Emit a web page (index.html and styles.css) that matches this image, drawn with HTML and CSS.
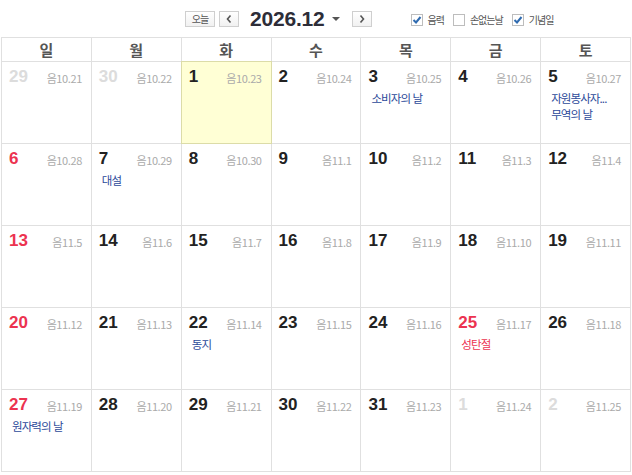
FILE: index.html
```html
<!DOCTYPE html>
<html lang="ko">
<head>
<meta charset="utf-8">
<title>2026.12</title>
<link rel="stylesheet" href="styles.css">
</head>
<body>
<div class="cal">
  <div class="topbar">
    <div class="nav">
      <button class="btn today-btn">오늘</button>
      <button class="btn arrow-btn prev"><svg width="8" height="10" viewBox="0 0 8 10"><path d="M5.5 1.5 L2.5 5 L5.5 8.5" fill="none" stroke="#555" stroke-width="1.6"/></svg></button>
      <div class="title">2026.12</div>
      <span class="caret"></span>
      <button class="btn arrow-btn next"><svg width="8" height="10" viewBox="0 0 8 10"><path d="M2.5 1.5 L5.5 5 L2.5 8.5" fill="none" stroke="#555" stroke-width="1.6"/></svg></button>
    </div>
    <div class="opts">
      <label class="opt"><span class="chk on"><svg width="10" height="10" viewBox="0 0 10 10"><path d="M1.5 5 L4 7.5 L8.5 2" fill="none" stroke="#2f6bb0" stroke-width="2"/></svg></span>음력</label>
      <label class="opt"><span class="chk"></span>손없는날</label>
      <label class="opt"><span class="chk on"><svg width="10" height="10" viewBox="0 0 10 10"><path d="M1.5 5 L4 7.5 L8.5 2" fill="none" stroke="#2f6bb0" stroke-width="2"/></svg></span>기념일</label>
    </div>
  </div>
  <div class="grid">
    <div class="wd">일</div><div class="wd">월</div><div class="wd">화</div><div class="wd">수</div><div class="wd">목</div><div class="wd">금</div><div class="wd">토</div>

    <div class="cell other"><div class="head"><span class="num">29</span><span class="lunar">음10.21</span></div></div>
    <div class="cell other"><div class="head"><span class="num">30</span><span class="lunar">음10.22</span></div></div>
    <div class="cell today"><div class="head"><span class="num">1</span><span class="lunar">음10.23</span></div></div>
    <div class="cell"><div class="head"><span class="num">2</span><span class="lunar">음10.24</span></div></div>
    <div class="cell"><div class="head"><span class="num">3</span><span class="lunar">음10.25</span></div><div class="ev">소비자의 날</div></div>
    <div class="cell"><div class="head"><span class="num">4</span><span class="lunar">음10.26</span></div></div>
    <div class="cell"><div class="head"><span class="num">5</span><span class="lunar">음10.27</span></div><div class="ev">자원봉사자...</div><div class="ev">무역의 날</div></div>

    <div class="cell sun"><div class="head"><span class="num">6</span><span class="lunar">음10.28</span></div></div>
    <div class="cell"><div class="head"><span class="num">7</span><span class="lunar">음10.29</span></div><div class="ev">대설</div></div>
    <div class="cell"><div class="head"><span class="num">8</span><span class="lunar">음10.30</span></div></div>
    <div class="cell"><div class="head"><span class="num">9</span><span class="lunar">음11.1</span></div></div>
    <div class="cell"><div class="head"><span class="num">10</span><span class="lunar">음11.2</span></div></div>
    <div class="cell"><div class="head"><span class="num">11</span><span class="lunar">음11.3</span></div></div>
    <div class="cell"><div class="head"><span class="num">12</span><span class="lunar">음11.4</span></div></div>

    <div class="cell sun"><div class="head"><span class="num">13</span><span class="lunar">음11.5</span></div></div>
    <div class="cell"><div class="head"><span class="num">14</span><span class="lunar">음11.6</span></div></div>
    <div class="cell"><div class="head"><span class="num">15</span><span class="lunar">음11.7</span></div></div>
    <div class="cell"><div class="head"><span class="num">16</span><span class="lunar">음11.8</span></div></div>
    <div class="cell"><div class="head"><span class="num">17</span><span class="lunar">음11.9</span></div></div>
    <div class="cell"><div class="head"><span class="num">18</span><span class="lunar">음11.10</span></div></div>
    <div class="cell"><div class="head"><span class="num">19</span><span class="lunar">음11.11</span></div></div>

    <div class="cell sun"><div class="head"><span class="num">20</span><span class="lunar">음11.12</span></div></div>
    <div class="cell"><div class="head"><span class="num">21</span><span class="lunar">음11.13</span></div></div>
    <div class="cell"><div class="head"><span class="num">22</span><span class="lunar">음11.14</span></div><div class="ev">동지</div></div>
    <div class="cell"><div class="head"><span class="num">23</span><span class="lunar">음11.15</span></div></div>
    <div class="cell"><div class="head"><span class="num">24</span><span class="lunar">음11.16</span></div></div>
    <div class="cell sun"><div class="head"><span class="num">25</span><span class="lunar">음11.17</span></div><div class="ev holiday">성탄절</div></div>
    <div class="cell"><div class="head"><span class="num">26</span><span class="lunar">음11.18</span></div></div>

    <div class="cell sun"><div class="head"><span class="num">27</span><span class="lunar">음11.19</span></div><div class="ev">원자력의 날</div></div>
    <div class="cell"><div class="head"><span class="num">28</span><span class="lunar">음11.20</span></div></div>
    <div class="cell"><div class="head"><span class="num">29</span><span class="lunar">음11.21</span></div></div>
    <div class="cell"><div class="head"><span class="num">30</span><span class="lunar">음11.22</span></div></div>
    <div class="cell"><div class="head"><span class="num">31</span><span class="lunar">음11.23</span></div></div>
    <div class="cell other"><div class="head"><span class="num">1</span><span class="lunar">음11.24</span></div></div>
    <div class="cell other"><div class="head"><span class="num">2</span><span class="lunar">음11.25</span></div></div>
  </div>
</div>
</body>
</html>
```

FILE: styles.css
```css
* { box-sizing: border-box; }
html, body { margin: 0; padding: 0; background: #fff; }
body { font-family: "Noto Sans CJK KR", "Noto Sans", sans-serif; color: #222; }

.cal { width: 632px; padding: 0 1px 0 1px; }

.topbar {
  height: 37px;
  display: flex;
  align-items: center;
  padding-left: 184px;
}
.nav { display: flex; align-items: center; }
.btn {
  margin: 0; padding: 0;
  border: 1px solid #cfcfcf;
  background: linear-gradient(#ffffff, #f1f1f1);
  height: 16px;
  display: flex; align-items: center; justify-content: center;
  font-family: "Noto Sans CJK KR", sans-serif;
}
.today-btn {
  width: 30px;
  font-size: 10px;
  letter-spacing: -1px;
  color: #555;
  line-height: 14px;
}
.arrow-btn { width: 20px; }
.prev { margin-left: 4px; }
.title {
  margin-left: 11px;
  font-family: "Liberation Sans", Arial, sans-serif;
  font-weight: 700;
  font-size: 21px;
  line-height: 24px;
  color: #2d2d38;
  letter-spacing: -0.2px;
}
.caret {
  margin-left: 7px;
  width: 0; height: 0;
  border-left: 4px solid transparent;
  border-right: 4px solid transparent;
  border-top: 4px solid #555;
  margin-top: 1px;
}
.next { margin-left: 12px; }

.opts { display: flex; align-items: center; margin-left: 39px; margin-top: 3px; }
.opt {
  display: flex; align-items: center;
  font-size: 10px;
  letter-spacing: -1px;
  color: #555;
  margin-right: 9px;
  line-height: 14px;
}
.chk {
  width: 12px; height: 12px;
  border: 1px solid #bdbdbd;
  background: #fff;
  margin-right: 5px;
  display: flex; align-items: center; justify-content: center;
}

.grid {
  display: grid;
  grid-template-columns: repeat(7, 1fr);
  grid-template-rows: 23px repeat(5, 81px);
  gap: 1px;
  padding: 1px;
  background: #e0e0e0;
  width: 630px;
}
.wd {
  background: #fff;
  display: flex; align-items: center; justify-content: center;
  font-size: 15px;
  font-weight: 700;
  color: #555;
}
.cell {
  background: #fff;
  padding: 5px 9px 0 7px;
  min-width: 0;
}
.cell.today {
  background: #ffffd5;
  box-shadow: 0 0 0 1px #dcdca8;
}
.head {
  display: flex;
  justify-content: space-between;
  align-items: center;
  height: 20px;
}
.num {
  font-family: "Liberation Sans", Arial, sans-serif;
  font-weight: 700;
  font-size: 17px;
  line-height: 20px;
  color: #222;
}
.lunar {
  font-size: 11px;
  color: #aaa;
  letter-spacing: -0.4px;
  margin-top: 1px;
}
.sun .num { color: #ec3350; }
.other .num { color: #dcdcdc; }
.ev {
  margin-left: 3px;
  font-size: 11.5px;
  letter-spacing: -0.9px;
  line-height: 16px;
  color: #2c4a9a;
  white-space: nowrap;
  overflow: hidden;
}
.head + .ev { margin-top: 3px; }
.ev.holiday { color: #ec3350; }
```
